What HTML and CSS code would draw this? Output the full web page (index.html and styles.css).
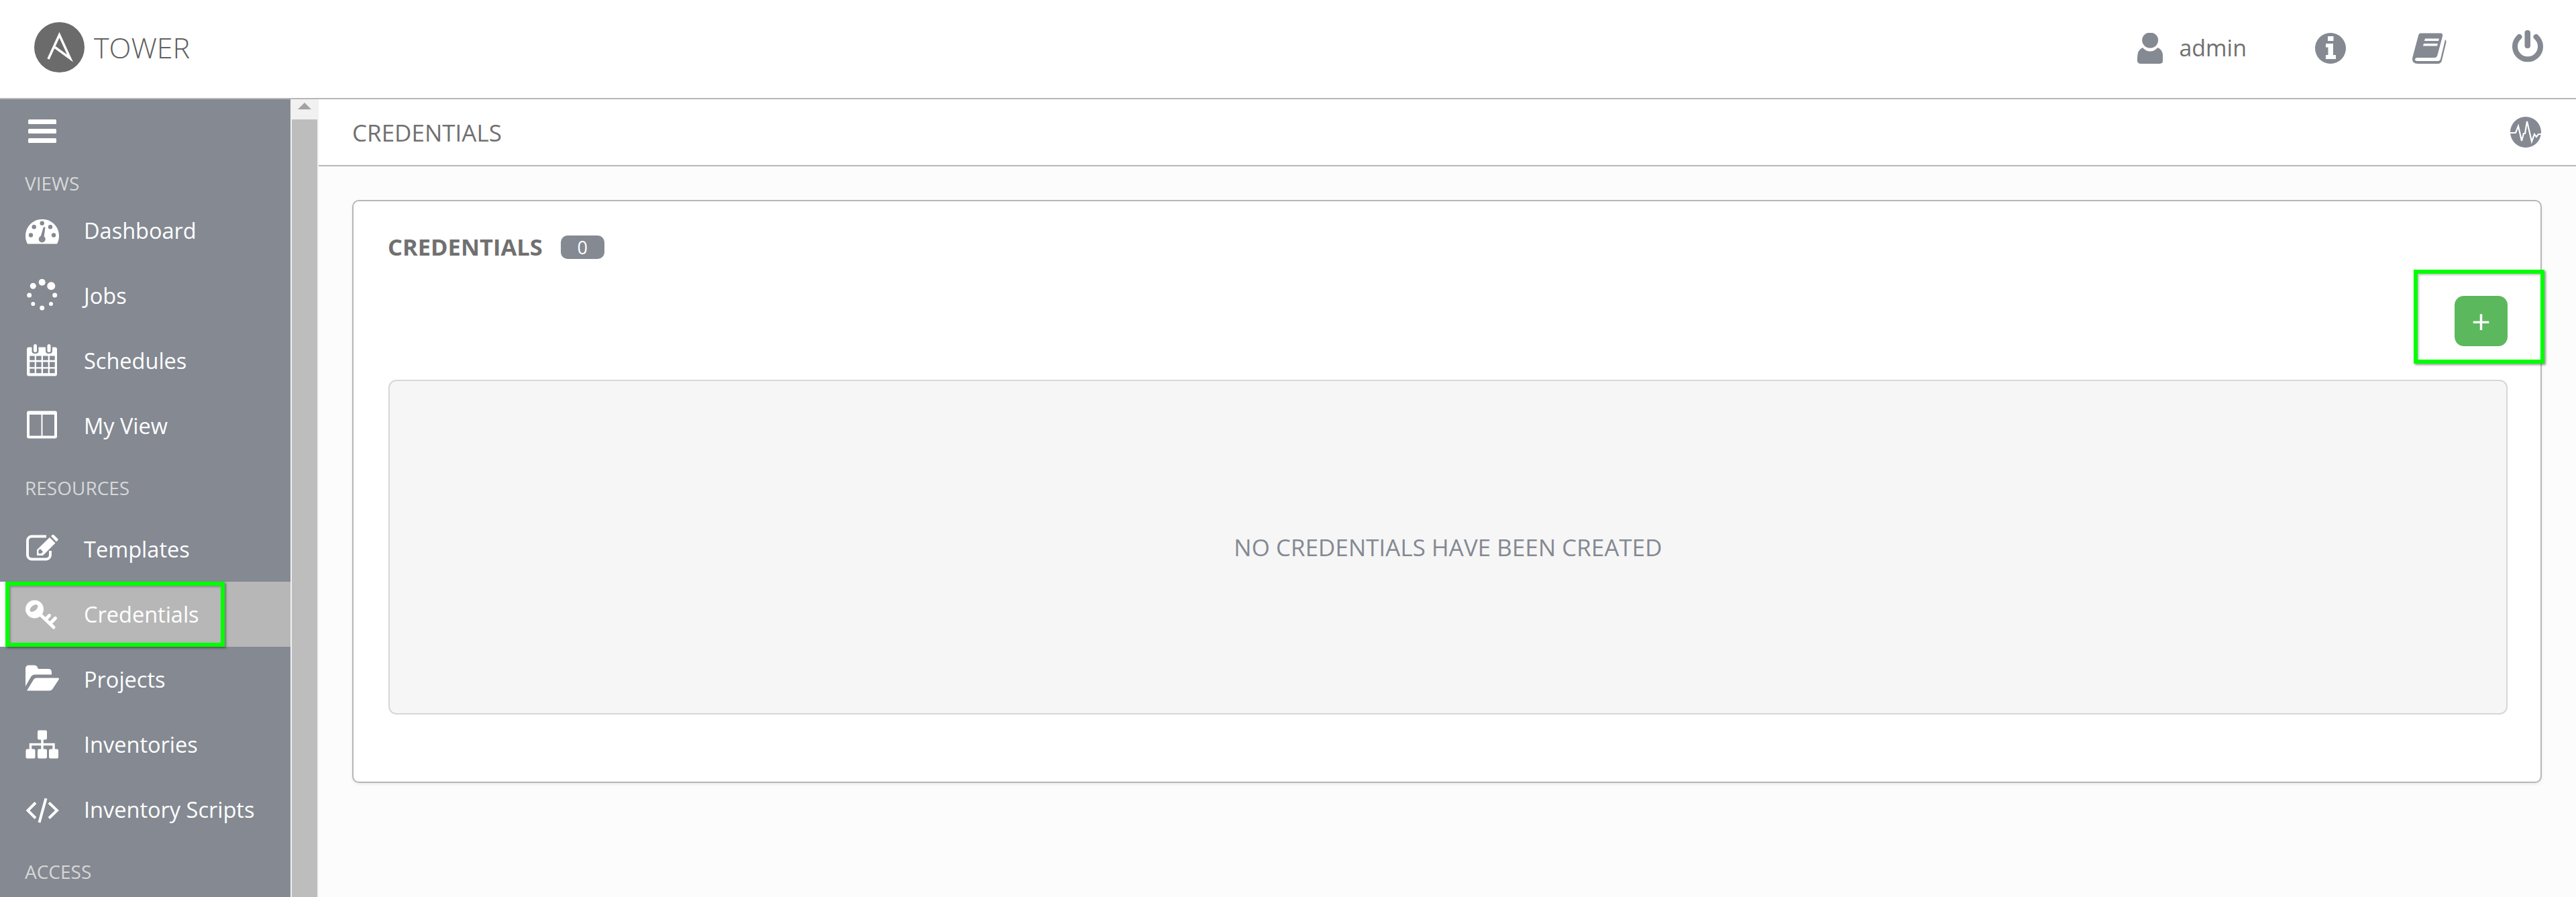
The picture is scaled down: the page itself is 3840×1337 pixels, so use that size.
FILE: index.html
```html
<!DOCTYPE html>
<html lang="en">
<head>
  <meta charset="UTF-8" />
  <title>Credentials | Tower</title>
  <link rel="stylesheet" href="styles.css">
</head>
<body>
  <header class="topbar">
    <svg class="logo" viewBox="0 0 75 75">
      <circle cx="37.5" cy="37.5" r="37.5" fill="#6b6b6b"/>
      <path d="M21 55 L37.5 19 L53.5 54 L31 37.5" fill="none" stroke="#fff" stroke-width="3.6"/>
    </svg>
    <span class="brand">TOWER</span>
    <div class="topbar-right">
      <svg class="top-icon user-icon" viewBox="0 0 38.5 46">
        <ellipse cx="19.2" cy="11" rx="12" ry="11.5"/>
        <path d="M8 22Q13 27.5 19.2 27.5Q25.500 27.500 30.500 22Q38.500 25 38.500 38V41Q38.500 46 33 46H5.500Q0 46 0 41V38Q0 25 8 22Z"/>
      </svg>
      <span class="username">admin</span>
      <svg class="top-icon info-icon" viewBox="0 0 46 46">
        <circle cx="23" cy="23" r="23"/>
        <path fill="#fff" d="M19 5H27.500V12H19ZM16 16H27V33H31V39H16V33H19.500V21.500H16Z"/>
      </svg>
      <svg class="top-icon book-icon" viewBox="0 0 51 46">
        <path d="M12 .5H42Q46 .5 45 5L37.500 33Q36.500 37 33 37H8Q4 37 4 39.500Q4 42 8 42H38Q41 42 42 39L49 10Q51 11 50.500 14L44 41Q43 46 38 46H8Q0 46 0 39Q0 37 1 34L9 4Q10 .5 12 .5Z"/>
        <path fill="#fff" d="M19 8.500H40L39 12H18ZM17 16H38L37 19.500H16Z"/>
      </svg>
      <svg class="top-icon power-icon" viewBox="0 0 46 50">
        <path d="M10.500 10A19 19 0 1 0 35.500 10" fill="none" stroke="#848992" stroke-width="8" stroke-linecap="round"/>
        <rect x="18.500" y="0" width="8.500" height="27" rx="4"/>
      </svg>
    </div>
  </header>

  <div class="layout">
    <nav class="sidebar">
      <div class="menu-toggle">
        <svg class="burger" viewBox="0 0 42 35">
          <rect y="0" width="42" height="7" rx="1.500"/>
          <rect y="14" width="42" height="7" rx="1.500"/>
          <rect y="28" width="42" height="7" rx="1.500"/>
        </svg>
      </div>

      <div class="nav-label nav-label-first">VIEWS</div>
      <a class="nav-item">
        <svg class="nav-icon" viewBox="0 0 50 50">
          <path d="M3 44.500A25 25 0 1 1 47 44.500Z"/>
          <g class="hole">
            <circle cx="12.700" cy="19.200" r="3.200"/>
            <circle cx="24.700" cy="13.800" r="3.200"/>
            <circle cx="37" cy="19.200" r="3.200"/>
            <circle cx="8" cy="31.500" r="3.200"/>
            <circle cx="42" cy="31.500" r="3.200"/>
            <circle cx="24.700" cy="37.500" r="5"/>
            <path d="M22.500 34L26.800 19.500H29.500L27.500 35Z"/>
          </g>
        </svg>
        Dashboard
      </a>
      <a class="nav-item">
        <svg class="nav-icon" viewBox="0 0 50 50">
          <circle cx="24.700" cy="4.700" r="5"/>
          <circle cx="38.300" cy="10.300" r="6"/>
          <circle cx="43.700" cy="24" r="3.500"/>
          <circle cx="38" cy="37" r="3"/>
          <circle cx="24.700" cy="43" r="3.500"/>
          <circle cx="11.300" cy="37" r="3"/>
          <circle cx="5.700" cy="24" r="3.500"/>
          <circle cx="11.300" cy="10.300" r="4.500"/>
        </svg>
        Jobs
      </a>
      <a class="nav-item">
        <svg class="nav-icon" viewBox="0 0 50 50">
          <rect x="2" y="4.500" width="45" height="43" rx="3"/>
          <g class="hole">
            <rect x="6.300" y="17.500" width="7.400" height="6.300"/>
            <rect x="16" y="17.500" width="7.700" height="6.300"/>
            <rect x="26" y="17.500" width="7.700" height="6.300"/>
            <rect x="36" y="17.500" width="7.700" height="6.300"/>
            <rect x="6.300" y="26.500" width="7.400" height="7.700"/>
            <rect x="16" y="26.500" width="7.700" height="7.700"/>
            <rect x="26" y="26.500" width="7.700" height="7.700"/>
            <rect x="36" y="26.500" width="7.700" height="7.700"/>
            <rect x="6.300" y="36.500" width="7.400" height="6.700"/>
            <rect x="16" y="36.500" width="7.700" height="6.700"/>
            <rect x="26" y="36.500" width="7.700" height="6.700"/>
            <rect x="36" y="36.500" width="7.700" height="6.700"/>
            <rect x="9.500" y="0" width="10" height="14" rx="4"/>
            <rect x="30" y="0" width="10" height="14" rx="4"/>
          </g>
          <rect x="12" y="0" width="5" height="12" rx="2.500"/>
          <rect x="32.500" y="0" width="5" height="12" rx="2.500"/>
        </svg>
        Schedules
      </a>
      <a class="nav-item">
        <svg class="nav-icon" viewBox="0 0 50 50">
          <rect x="2" y="2.500" width="45" height="41" rx="3"/>
          <g class="hole">
            <rect x="6" y="8" width="17.500" height="31.500"/>
            <rect x="25.500" y="8" width="17.500" height="31.500"/>
          </g>
        </svg>
        My View
      </a>

      <div class="nav-label">RESOURCES</div>
      <a class="nav-item">
        <svg class="nav-icon" viewBox="0 0 50 50">
          <path d="M31 5.500H9A6.500 6.500 0 0 0 3 12V33A6.500 6.500 0 0 0 9 39.500H31A6.500 6.500 0 0 0 37 33V27" fill="none" stroke="#fff" stroke-width="4"/>
          <path d="M17 34V25.500L36 7L44.500 15.500L26 34ZM38 5L40.500 3Q41.500 2.500 42.500 3.500L48.500 9.500Q49 10.500 48 11.500L46 13.500Z"/>
          <path class="hole" d="M19.500 26.500L22 24L26 28.500L23.500 31H19.500Z"/>
        </svg>
        Templates
      </a>
      <a class="nav-item nav-item-active">
        <svg class="nav-icon" viewBox="0 0 50 50">
          <circle cx="13.500" cy="17" r="13.500"/>
          <ellipse class="key-hole" cx="12.500" cy="15.500" rx="7" ry="4" transform="rotate(-40 12.500 15.500)"/>
          <path d="M22 25L42 44M36.500 38.500L44.500 30.500M30 32L35.500 26.500" fill="none" stroke="#fff" stroke-width="5" stroke-linecap="round"/>
        </svg>
        Credentials
        <span class="highlight"></span>
      </a>
      <a class="nav-item">
        <svg class="nav-icon" viewBox="0 0 50 50">
          <path d="M0 9Q0 3.500 5 3.500H13Q17 3.500 18 7L19 9H34Q39 9 39 14V17.500H14Q10 17.500 8 21L0 35Z"/>
          <path d="M2 41.500L12 25Q13.500 22.500 16 22.500H48.500Q51 22.500 49.500 25L41 38Q39 41.500 35 41.500Z"/>
        </svg>
        Projects
      </a>
      <a class="nav-item">
        <svg class="nav-icon" viewBox="0 0 50 50">
          <path d="M25 16V32M7.500 32V24.500H42V32" fill="none" stroke="#fff" stroke-width="3.500"/>
          <rect x="18" y="3.500" width="14" height="14" rx="2"/>
          <rect x="0.500" y="31.500" width="14" height="14" rx="2"/>
          <rect x="18" y="31.500" width="14" height="14" rx="2"/>
          <rect x="35" y="31.500" width="14" height="14" rx="2"/>
        </svg>
        Inventories
      </a>
      <a class="nav-item">
        <svg class="nav-icon" viewBox="0 0 50 50">
          <path d="M15 14.500L3.500 26L15 37.500M35 14.500L47 26L35 37.500M30.500 8L20.500 44" fill="none" stroke="#fff" stroke-width="4"/>
        </svg>
        Inventory Scripts
      </a>

      <div class="nav-label">ACCESS</div>
    </nav>

    <div class="scrollbar">
      <div class="scroll-btn"><span class="scroll-arrow"></span></div>
      <div class="scroll-thumb"></div>
    </div>

    <main class="content">
      <div class="breadcrumb">
        <span>CREDENTIALS</span>
        <svg class="activity-icon" viewBox="0 0 46 46">
          <circle cx="23" cy="23" r="23" fill="#848992"/>
          <path d="M0 24H8L12 14L17 36L20 25H22L25 7L32 37L36 26L39 30L42 26H46" fill="none" stroke="#fff" stroke-width="2.200"/>
        </svg>
      </div>

      <section class="card">
        <div class="card-title">
          <span class="card-heading">CREDENTIALS</span>
          <span class="badge">0</span>
        </div>
        <div class="card-actions">
          <div class="add-wrap">
            <button class="add-btn">+</button>
            <span class="highlight highlight-add"></span>
          </div>
        </div>
        <div class="empty-panel">NO CREDENTIALS HAVE BEEN CREATED</div>
      </section>
    </main>
  </div>
</body>
</html>
```
FILE: styles.css
```css
* {
  box-sizing: border-box;
}

body {
  margin: 0;
  height: 1337px;
  overflow: hidden;
  font-family: "Open Sans", sans-serif;
  background: #fcfcfc;
  color: #707070;
}

.topbar {
  display: flex;
  align-items: center;
  height: 148px;
  padding: 0 49px 5px 51px;
  background: #fff;
  border-bottom: 2px solid #b7b7b7;
}

.logo {
  width: 75px;
  height: 75px;
}

.brand {
  margin-left: 14px;
  font-size: 43px;
  font-weight: 300;
  color: #5f5f5f;
}

.topbar-right {
  display: flex;
  align-items: center;
  margin-left: auto;
}

.top-icon {
  fill: #848992;
}

.user-icon {
  width: 38.5px;
  height: 46px;
  margin-top: 2px;
}

.username {
  margin-left: 24px;
  padding-top: 1px;
  font-size: 34px;
}

.info-icon {
  width: 46px;
  height: 46px;
  margin-left: 102px;
  margin-top: 2px;
}

.book-icon {
  width: 51px;
  height: 46px;
  margin-left: 99px;
  margin-top: 2px;
}

.power-icon {
  width: 46px;
  height: 50px;
  margin-left: 98px;
  margin-top: -2px;
}

.layout {
  display: flex;
  height: 1189px;
}

.sidebar {
  width: 433px;
  flex-shrink: 0;
  overflow: hidden;
  background: #848992;
  color: #fff;
}

.menu-toggle {
  height: 102px;
  padding: 30px 0 0 42px;
}

.burger {
  display: block;
  width: 42px;
  height: 35px;
  fill: #fff;
}

.nav-label {
  display: flex;
  align-items: center;
  height: 87px;
  padding: 1px 0 0 37px;
  font-size: 28px;
  color: #d7d7d7;
}

.nav-label-first {
  height: 45px;
  padding-top: 0;
}

.nav-item {
  position: relative;
  display: flex;
  align-items: center;
  height: 97px;
  padding-left: 38px;
  font-size: 32.5px;
}

.nav-item-active {
  padding-left: 30px;
  background: #b7b7b7;
  border-left: 8px solid #fff;
}

.nav-icon {
  width: 50px;
  height: 50px;
  margin-right: 37px;
  flex-shrink: 0;
  fill: #fff;
}

.hole {
  fill: #848992;
}

.key-hole {
  fill: #b7b7b7;
}

.highlight {
  position: absolute;
  top: 0;
  left: 0;
  width: 327px;
  height: 97px;
  border: 6px solid #00ff00;
  box-shadow: 2px 2px 3px rgba(0, 0, 0, 0.4), inset 2px 2px 3px rgba(0, 0, 0, 0.25);
}

.highlight-add {
  top: -39px;
  left: -61px;
  width: 195px;
  height: 140px;
}

.scrollbar {
  width: 42px;
  flex-shrink: 0;
  display: flex;
  flex-direction: column;
  padding: 0 2px;
  background: #f1f1f1;
}

.scroll-btn {
  display: flex;
  justify-content: center;
  height: 30px;
  padding-top: 5px;
}

.scroll-arrow {
  width: 0;
  height: 0;
  border-left: 10px solid transparent;
  border-right: 10px solid transparent;
  border-bottom: 10px solid #a3a3a3;
}

.scroll-thumb {
  flex: 1;
  background: #bdbdbd;
}

.content {
  flex: 1;
  min-width: 0;
}

.breadcrumb {
  display: flex;
  align-items: center;
  justify-content: space-between;
  height: 100px;
  padding: 0 52px 0 50px;
  background: #fff;
  border-bottom: 2px solid #b7b7b7;
  font-size: 35px;
}

.activity-icon {
  width: 46px;
  height: 46px;
}

.card {
  margin: 50px 51px 0 50px;
  padding: 51px 49px 100px 52px;
  background: #fff;
  border: 2px solid #b7b7b7;
  border-radius: 10px;
  box-shadow: 0 2px 4px rgba(0, 0, 0, 0.08);
}

.card-title {
  display: flex;
  align-items: center;
  height: 35px;
}

.card-heading {
  margin-left: -1px;
  padding-bottom: 2px;
  font-size: 34.5px;
  font-weight: 700;
}

.badge {
  display: flex;
  align-items: center;
  justify-content: center;
  width: 65px;
  height: 35px;
  margin-left: 27px;
  background: #848992;
  border-radius: 10px;
  color: #fff;
  font-size: 27px;
}

.card-actions {
  display: flex;
  justify-content: flex-end;
  margin: 55px 0 50px;
}

.add-wrap {
  position: relative;
  height: 75px;
}

.add-btn {
  display: block;
  width: 79px;
  height: 75px;
  padding: 2px 0 0;
  background: #5cb85c;
  border: none;
  border-radius: 14px;
  color: #fff;
  font-family: "Open Sans", sans-serif;
  font-size: 50px;
  line-height: 73px;
}

.empty-panel {
  display: flex;
  align-items: center;
  justify-content: center;
  height: 499px;
  background: #f6f6f6;
  border: 2px solid #d7d7d7;
  border-radius: 12px;
  color: #848992;
  font-size: 35px;
}
```
